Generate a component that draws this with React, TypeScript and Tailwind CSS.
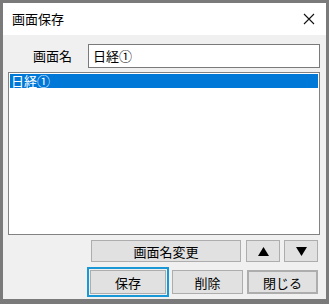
function Btn({
  label,
  className = "",
}: {
  label: React.ReactNode;
  className?: string;
}) {
  return (
    <div
      className={
        "flex items-center justify-center bg-[#e1e1e1] border border-[#adadad] text-[13px] text-black leading-none " +
        className
      }
    >
      {label}
    </div>
  );
}

function Tri({ down }: { down?: boolean }) {
  return (
    <svg width="11" height="9" viewBox="0 0 11 9">
      <path d={down ? "M0 0 H11 L5.5 9 Z" : "M0 9 H11 L5.5 0 Z"} fill="#000" />
    </svg>
  );
}

function App() {
  return (
    <div
      className="w-[329px] h-[304px] bg-[#7a7a7a] pt-[3px] px-[3px] pb-[5px] flex flex-col"
      style={{ fontFamily: '"Noto Sans CJK JP", "Noto Sans", sans-serif' }}
    >
      <div className="h-[32px] bg-white flex items-center justify-between pl-[9px] pr-[11px] shrink-0">
        <span className="text-[13px] text-black">画面保存</span>
        <svg width="12" height="12" viewBox="0 0 12 12">
          <path d="M1 1 L11 11 M11 1 L1 11" stroke="#111" strokeWidth="1.1" />
        </svg>
      </div>

      <div className="flex-1 bg-[#f0f0f0] flex flex-col pt-[9px] pb-[5px]">
        <div className="flex items-center h-[24px] pl-[30px] pr-[6px]">
          <span className="text-[13px] text-black w-[40px]">画面名</span>
          <div className="ml-[15px] flex-1 h-full bg-white border border-[#7a7a7a] flex items-center pl-[4px] text-[13px] text-black">
            日経①
          </div>
        </div>

        <div className="mt-[4px] ml-[5px] mr-[6px] h-[163px] bg-white border border-[#828282] p-px">
          <div className="h-[14px] bg-[#0078d7] text-white text-[13px] leading-[14px] pl-px">
            日経①
          </div>
        </div>

        <div className="mt-[5px] flex justify-end gap-[4px] pr-[8px] h-[22px]">
          <Btn label="画面名変更" className="w-[150px]" />
          <Btn label={<Tri />} className="w-[34px] ml-[1px]" />
          <Btn label={<Tri down />} className="w-[34px]" />
        </div>

        <div className="mt-[8px] flex justify-end pr-[8px] h-[24px]">
          <Btn
            label="保存"
            className="w-[76px] outline-2 outline-[#1a98d5] outline-offset-1"
          />
          <Btn label="削除" className="w-[71px] ml-[6px]" />
          <Btn
            label="閉じる"
            className="w-[71px] ml-[4px] border-2 border-[#0078d7]"
          />
        </div>
      </div>
    </div>
  );
}

export default App;
